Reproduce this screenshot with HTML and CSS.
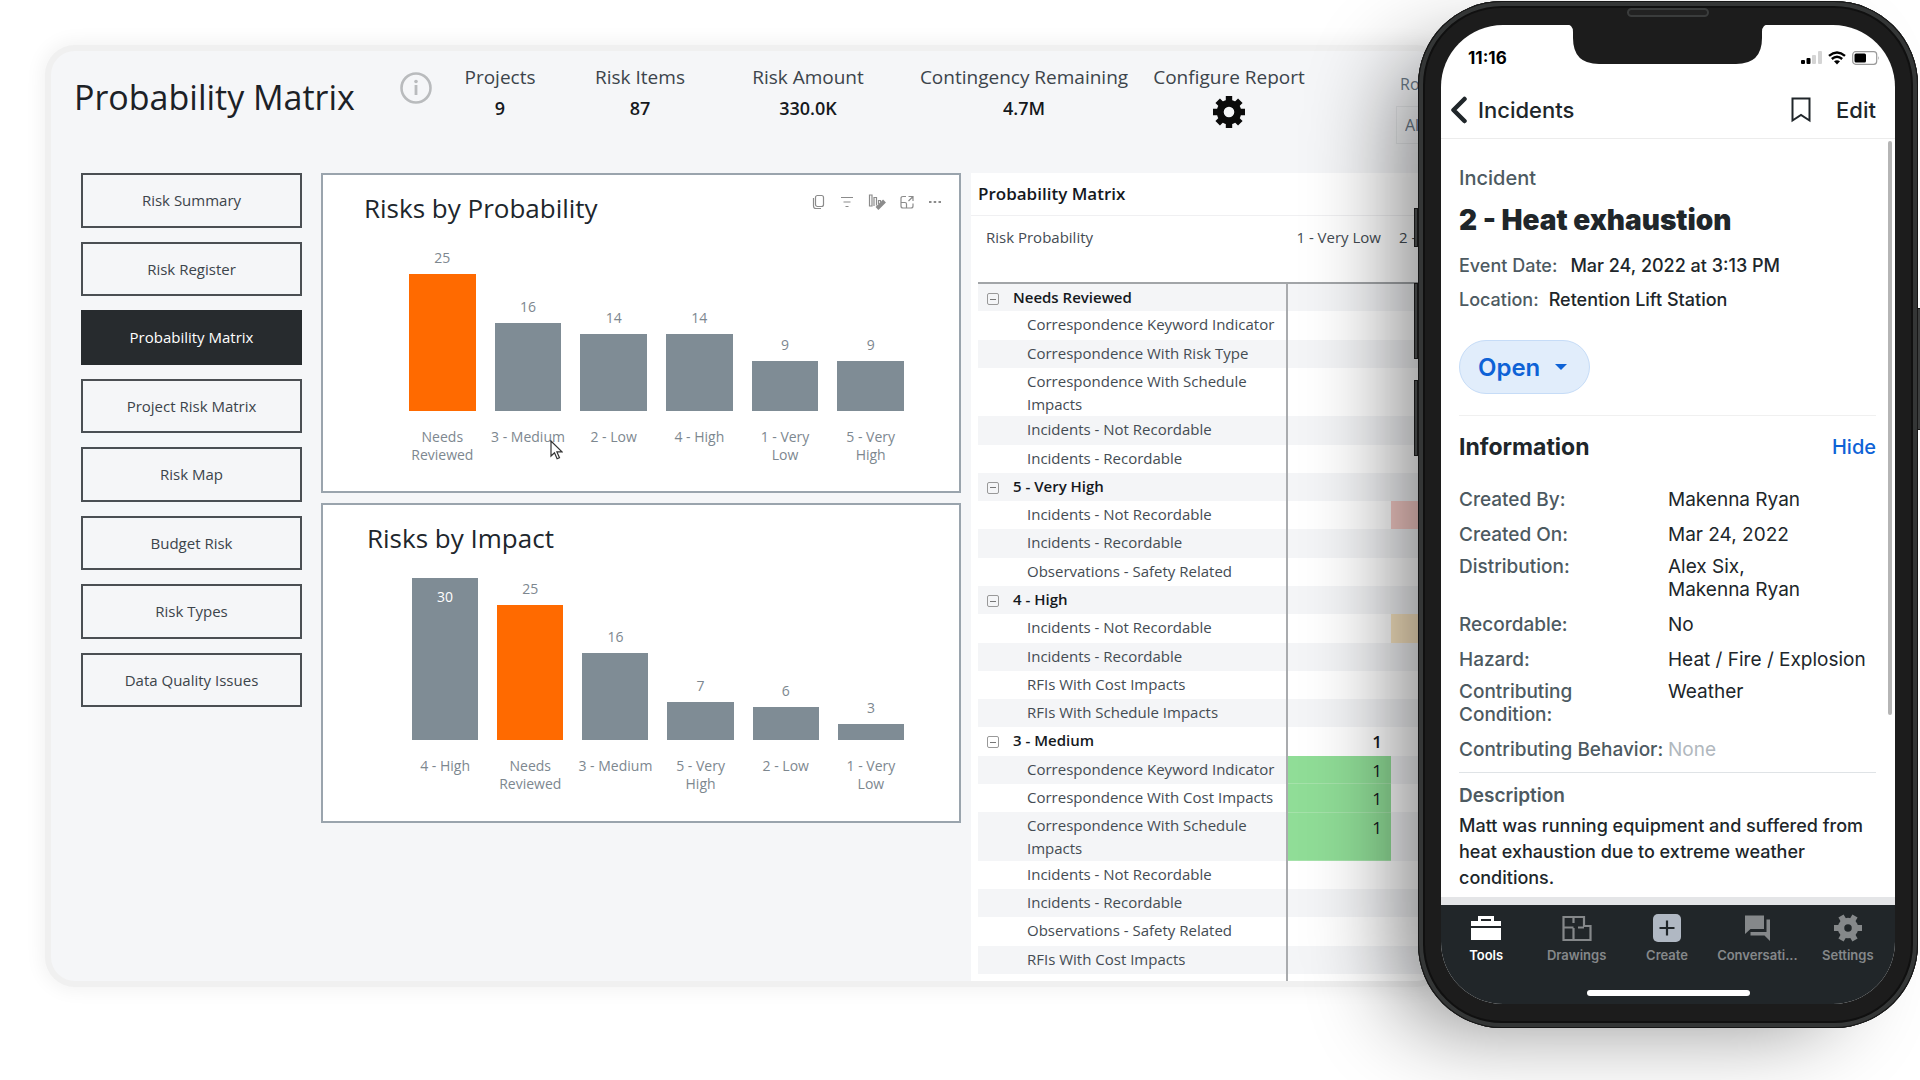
FILE: index.html
```html
<!DOCTYPE html>
<html lang="en">
<head>
<meta charset="utf-8">
<title>Probability Matrix</title>
<link rel="stylesheet" href="styles.css">
</head>
<body>
<main class="hero">
  <section class="dashboard">
    <header class="top">
      <h1>Probability Matrix</h1>
      <button class="info" aria-label="Info"><svg viewBox="0 0 32 32" width="32" height="32"><circle cx="16" cy="16" r="14.5" fill="none" stroke="#b9bbbd" stroke-width="2.6"/><path d="M16 13v10" stroke="#b9bbbd" stroke-width="2.8"/><circle cx="16" cy="9.5" r="1.8" fill="#b9bbbd"/></svg></button>
      <dl class="stats">
        <div><dt>Projects</dt><dd>9</dd></div>
        <div><dt>Risk Items</dt><dd>87</dd></div>
        <div><dt>Risk Amount</dt><dd>330.0K</dd></div>
        <div><dt>Contingency Remaining</dt><dd>4.7M</dd></div>
        <div><dt>Configure Report</dt><dd><button class="gear" aria-label="Configure Report"><svg viewBox="-16 -16 32 32" width="32" height="32"><circle r="8.8" fill="none" stroke="#0b0b0b" stroke-width="7"/><g stroke="#0b0b0b" stroke-width="6.4"><path d="M0-11V-16M0 11V16M-11 0H-16M11 0H16"/><path transform="rotate(45)" d="M0-11V-16M0 11V16M-11 0H-16M11 0H16"/></g></svg></button></dd></div>
      </dl>
      <div class="slicer">
        <label for="role">Role</label>
        <select id="role"><option>All</option></select>
      </div>
    </header>
    <div class="body">
      <nav class="menu">
        <button>Risk Summary</button>
        <button>Risk Register</button>
        <button class="active">Probability Matrix</button>
        <button>Project Risk Matrix</button>
        <button>Risk Map</button>
        <button>Budget Risk</button>
        <button>Risk Types</button>
        <button>Data Quality Issues</button>
      </nav>
      <div class="charts">
        <article class="card">
          <div class="card-head">
            <h2>Risks by Probability</h2>
            <div class="tools">
              <button aria-label="Copy"><svg viewBox="0 0 14 16" width="14" height="16"><rect x="3.5" y="1.5" width="8" height="11" rx="2"/><path d="M1.500 4v8q0 2.500 2.500 2.500h5"/></svg></button>
              <button aria-label="Filter"><svg viewBox="0 0 14 16" width="14" height="16"><path d="M1 3.500h12M3.500 8h7M5.500 12.500h3"/></svg></button>
              <button aria-label="Personalize"><svg viewBox="0 0 18 16" width="18" height="16"><path d="M1.500 1h2.500v11h-2.500zM6 12V3.500h2.500v8M10.500 10V6.500h2v2"/><path d="M9 14.500l7.500-7.500" stroke-width="4"/></svg></button>
              <button aria-label="Focus mode"><svg viewBox="0 0 14 16" width="14" height="16"><path d="M6 2.500H3q-2 0-2 2V12q0 2 2 2h8q2 0 2-2V9.500M8.500 2.500H13V7M13 2.500L8.500 7M1 8.500h4q1.500 0 1.500 1.500v4"/></svg></button>
              <button aria-label="More"><svg viewBox="0 0 14 16" width="14" height="16"><path d="M1 8h2.500M5.700 8h2.500M10.500 8h2.500" stroke-width="2.200"/></svg></button>
            </div>
          </div>
          <div class="chart">
            <div class="col"><span>25</span><i class="bar hot" style="height:137px"></i></div>
            <div class="col"><span>16</span><i class="bar" style="height:88px"></i></div>
            <div class="col"><span>14</span><i class="bar" style="height:77px"></i></div>
            <div class="col"><span>14</span><i class="bar" style="height:77px"></i></div>
            <div class="col"><span>9</span><i class="bar" style="height:50px"></i></div>
            <div class="col"><span>9</span><i class="bar" style="height:50px"></i></div>
          </div>
          <div class="axis"><span>Needs<br>Reviewed</span><span>3 - Medium</span><span>2 - Low</span><span>4 - High</span><span>1 - Very<br>Low</span><span>5 - Very<br>High</span></div>
          <svg class="cursor" viewBox="0 0 13 20" width="13" height="20"><path d="M1 1v15l3.500-3.300 2.600 6 2.400-1-2.600-5.800H12z" fill="#fff" stroke="#333" stroke-width="1.200"/></svg>
        </article>
        <article class="card impact">
          <div class="card-head"><h2>Risks by Impact</h2></div>
          <div class="chart">
            <div class="col"><i class="bar" style="height:162px"><span class="inside">30</span></i></div>
            <div class="col"><span>25</span><i class="bar hot" style="height:135px"></i></div>
            <div class="col"><span>16</span><i class="bar" style="height:87px"></i></div>
            <div class="col"><span>7</span><i class="bar" style="height:38px"></i></div>
            <div class="col"><span>6</span><i class="bar" style="height:33px"></i></div>
            <div class="col"><span>3</span><i class="bar" style="height:16px"></i></div>
          </div>
          <div class="axis"><span>4 - High</span><span>Needs<br>Reviewed</span><span>3 - Medium</span><span>5 - Very<br>High</span><span>2 - Low</span><span>1 - Very<br>Low</span></div>
        </article>
      </div>
      <article class="matrix">
        <h3>Probability Matrix</h3>
        <table>
          <colgroup><col class="c-name"><col class="c-val"><col></colgroup>
          <thead><tr><th>Risk Probability</th><th class="num">1 - Very Low</th><th>2 - Low</th></tr></thead>
          <tbody>
            <tr class="group"><th><button aria-label="Collapse"></button>Needs Reviewed</th><td></td><td></td></tr>
            <tr><th>Correspondence Keyword Indicator</th><td></td><td></td></tr>
            <tr><th>Correspondence With Risk Type</th><td></td><td></td></tr>
            <tr><th>Correspondence With Schedule Impacts</th><td></td><td></td></tr>
            <tr><th>Incidents - Not Recordable</th><td></td><td></td></tr>
            <tr><th>Incidents - Recordable</th><td></td><td></td></tr>
            <tr class="group"><th><button aria-label="Collapse"></button>5 - Very High</th><td></td><td></td></tr>
            <tr><th>Incidents - Not Recordable</th><td></td><td class="red"></td></tr>
            <tr><th>Incidents - Recordable</th><td></td><td></td></tr>
            <tr><th>Observations - Safety Related</th><td></td><td></td></tr>
            <tr class="group"><th><button aria-label="Collapse"></button>4 - High</th><td></td><td></td></tr>
            <tr><th>Incidents - Not Recordable</th><td></td><td class="amber"></td></tr>
            <tr><th>Incidents - Recordable</th><td></td><td></td></tr>
            <tr><th>RFIs With Cost Impacts</th><td></td><td></td></tr>
            <tr><th>RFIs With Schedule Impacts</th><td></td><td></td></tr>
            <tr class="group"><th><button aria-label="Collapse"></button>3 - Medium</th><td>1</td><td></td></tr>
            <tr><th>Correspondence Keyword Indicator</th><td class="green">1</td><td></td></tr>
            <tr><th>Correspondence With Cost Impacts</th><td class="green">1</td><td></td></tr>
            <tr><th>Correspondence With Schedule Impacts</th><td class="green">1</td><td></td></tr>
            <tr><th>Incidents - Not Recordable</th><td></td><td></td></tr>
            <tr><th>Incidents - Recordable</th><td></td><td></td></tr>
            <tr><th>Observations - Safety Related</th><td></td><td></td></tr>
            <tr><th>RFIs With Cost Impacts</th><td></td><td></td></tr>
          </tbody>
          <tfoot><tr><th></th><td></td><td></td></tr></tfoot>
        </table>
      </article>
    </div>
  </section>

  <section class="phone">
    <i class="key mute"></i><i class="key up"></i><i class="key down"></i><i class="key power"></i>
    <svg class="notch" viewBox="0 0 205 40" width="205" height="40"><path d="M0 0Q8 0 8 8V14Q8 40 34 40H171Q197 40 197 14V8Q197 0 205 0Z" fill="#1c1c1c"/></svg>
    <i class="speaker"></i>
    <div class="screen">
      <div class="status">
        <span>11:16</span>
        <div class="signals">
          <svg viewBox="0 0 21 14" width="21" height="14"><g fill="#000"><rect y="9" width="4" height="4" rx="1"/><rect x="5.500" y="7" width="4" height="6" rx="1"/></g><g fill="#d4d4d4"><rect x="11" y="4" width="4" height="9" rx="1"/><rect x="17" y="0" width="4" height="13" rx="1"/></g></svg>
          <svg viewBox="0 0 18 14" width="18" height="14" fill="none" stroke="#000" stroke-width="2.400"><path d="M1 4.800Q9-2 17 4.800M3.800 8Q9 3.500 14.200 8"/><path d="M9 13.500L6 10.300Q9 8 12 10.300Z" fill="#000" stroke="none"/></svg>
          <svg viewBox="0 0 28 14" width="28" height="14"><rect x=".7" y=".7" width="24" height="12.600" rx="3" fill="#fff" stroke="#9a9a9a" stroke-width="1.200"/><rect x="2.500" y="2.500" width="11.500" height="9" rx="1.500" fill="#000"/><path d="M26.300 5v4q1.500-2 0-4" fill="#9a9a9a"/></svg>
        </div>
      </div>
      <div class="navbar">
        <a class="back" href="#"><svg viewBox="0 0 17 28" width="17" height="28"><path d="M14.500 3L3.500 14l11 11" fill="none" stroke="#20262a" stroke-width="4.500" stroke-linecap="round" stroke-linejoin="round"/></svg>Incidents</a>
        <button class="mark" aria-label="Bookmark"><svg viewBox="0 0 20 26" width="20" height="26"><path d="M1.500 1.500h17v22l-8.500-5.500-8.500 5.500z" fill="none" stroke="#20262a" stroke-width="2"/></svg></button>
        <a class="edit" href="#">Edit</a>
      </div>
      <div class="content">
        <div class="summary">
          <p class="kind">Incident</p>
          <h2>2 - Heat exhaustion</h2>
          <p class="fact"><span>Event Date:</span> <b>Mar 24, 2022 at 3:13 PM</b></p>
          <p class="fact place"><span>Location:</span> <b>Retention Lift Station</b></p>
          <button class="pill">Open<svg viewBox="0 0 12 6" width="12" height="6"><path d="M0 0h12L6 6z" fill="#0e62d6"/></svg></button>
        </div>
        <div class="section-head"><h3>Information</h3><a href="#">Hide</a></div>
        <dl class="details">
          <dt>Created By:</dt><dd>Makenna Ryan</dd>
          <dt>Created On:</dt><dd>Mar 24, 2022</dd>
          <dt class="two">Distribution:</dt><dd class="two">Alex Six,<br>Makenna Ryan</dd>
          <dt>Recordable:</dt><dd>No</dd>
          <dt>Hazard:</dt><dd>Heat / Fire / Explosion</dd>
          <dt class="two">Contributing<br>Condition:</dt><dd class="two">Weather</dd>
          <dt>Contributing Behavior:</dt><dd class="none">None</dd>
        </dl>
        <div class="description">
          <h4>Description</h4>
          <p>Matt was running equipment and suffered from heat exhaustion due to extreme weather conditions.</p>
        </div>
        <i class="scroll"></i>
      </div>
      <nav class="tabs">
        <a class="on" href="#"><svg viewBox="0 0 30 28" width="30" height="28"><path d="M0 7h7V2h16v5h7v5H0zM10 5v2h10V5zM0 14h30v12H0z" fill="#fff" fill-rule="evenodd"/></svg>Tools</a>
        <a href="#"><svg viewBox="0 0 30 28" width="30" height="28"><path d="M1.500 3H22v9h6.500v14H1.500zM11.500 3v6M11.500 14v12M1.500 13.500h10M16 13.500h6" fill="none" stroke="#85888a" stroke-width="2.200"/></svg>Drawings</a>
        <a href="#"><svg viewBox="0 0 28 28" width="28" height="28"><rect width="28" height="28" rx="5" fill="#b0b8c3"/><path d="M14 6.500v15M6.500 14h15" stroke="#20262a" stroke-width="2.200"/></svg>Create</a>
        <a href="#"><svg viewBox="0 0 30 28" width="30" height="28"><path d="M3 1.500h19V15H8.500L3 20zM24.500 5.500H28V27l-5.500-5.500H8.500V18H24.500z" fill="#85888a"/></svg>Conversati...</a>
        <a href="#"><svg viewBox="-14 -14 28 28" width="28" height="28"><circle r="7" fill="none" stroke="#85888a" stroke-width="6.500"/><g stroke="#85888a" stroke-width="6"><path d="M-9 0h-5M9 0h5"/><path transform="rotate(60)" d="M-9 0h-5M9 0h5"/><path transform="rotate(120)" d="M-9 0h-5M9 0h5"/></g></svg>Settings</a>
      </nav>
      <div class="home"><i></i></div>
    </div>
  </section>
</main>
</body>
</html>
```
FILE: styles.css
```css
* { box-sizing: border-box; }
body { margin: 0; background: #fff; overflow: hidden; }
h1, h2, h3, h4, p, dl, dd { margin: 0; font-weight: 400; }
button { font: inherit; color: inherit; background: none; border: 0; padding: 0; }
a { color: inherit; text-decoration: none; }
svg { display: block; }
i { display: block; }

.hero { position: relative; min-height: 100vh; padding: 51px 480px 60px 51px; overflow: hidden; }

/* Dashboard */
.dashboard {
  min-height: 930px;
  padding: 0 0 0 30px;
  border-radius: 24px;
  background: #f5f6f8;
  box-shadow: 0 0 0 6px #f0f0f0, 0 0 18px 10px rgba(0, 0, 0, .05);
  font-family: "Open Sans", "Noto Sans", sans-serif;
  color: #3c444b;
  overflow: hidden;
}
.top { display: flex; height: 122px; }
.top > * { flex: none; }
.top h1 { width: 326px; padding-top: 18px; margin-left: -7px; font-size: 34px; line-height: 56px; color: #1c2126; white-space: nowrap; }
.info { align-self: flex-start; margin-top: 21px; }
.stats { display: grid; grid-template-columns: 140px 140px 196px 236px 174px; margin-left: -2px; padding-top: 14px; text-align: center; white-space: nowrap; }
.stats dt { font-size: 19px; line-height: 24px; }
.stats dd { padding-top: 7px; font-size: 18px; line-height: 24px; font-weight: 600; color: #15191d; }
.slicer { margin-left: 80px; padding-top: 21px; font-size: 16px; }
.slicer label { display: block; padding-left: 4px; line-height: 24px; color: #6c7a88; }
.slicer select { display: block; width: 90px; height: 38px; margin-top: 10px; padding-left: 8px; appearance: none; border: 1px solid #e6e8ea; background: #f5f6f8; color: #6c7a88; font: 16px "Open Sans", sans-serif; }

.body { display: flex; align-items: flex-start; }
.menu { display: grid; grid-auto-rows: 1fr; gap: 14px; width: 221px; height: 534px; }
.menu button { border: 2px solid #4b4f53; font-size: 15px; }
.menu .active { background: #272b2e; border-color: #272b2e; color: #fff; }

.charts { display: grid; gap: 10px; width: 640px; margin-left: 19px; }
.card { position: relative; height: 320px; padding: 15px 55px 0 86px; border: 2px solid #9aa4ad; background: #fff; }
.card-head { display: flex; justify-content: space-between; align-items: flex-start; margin: 0 -38px 0 -45px; height: 40px; }
.card h2 { font-size: 26px; line-height: 36px; color: #20262c; white-space: nowrap; }
.tools { display: flex; gap: 14px; align-items: center; height: 24px; }
.tools svg { fill: none; stroke: #8b8b8b; stroke-width: 1.2; }
.chart, .axis { display: grid; grid-template-columns: repeat(6, minmax(0, 1fr)); gap: 19px; font-size: 14px; color: #7d878f; }
.chart { height: 181px; align-items: end; }
.col { text-align: center; }
.col span { display: block; line-height: 18px; padding-bottom: 7px; }
.bar { background: #7f8c95; }
.hot { background: #ff6a00; }
.col .inside { padding-top: 10px; color: #fff; font-style: normal; }
.axis { padding-top: 17px; text-align: center; line-height: 18px; white-space: nowrap; }
.axis span { justify-self: center; }
.impact { padding-left: 89px; }
.impact .chart { height: 180px; }
.cursor { position: absolute; left: 227px; top: 265px; }

.matrix { flex: 1; min-width: 0; margin-left: 10px; padding: 0 0 0 7px; background: #fff; }
.matrix h3 { margin-left: -7px; padding-left: 7px; font-size: 17px; line-height: 42px; font-weight: 600; color: #15191d; border-bottom: 1px solid #f0f0f2; }
table { width: 100%; height: 765px; table-layout: fixed; border-collapse: collapse; font-size: 15px; line-height: 23px; color: #444c53; }
.c-name { width: 309px; }
.c-val { width: 104px; }
th { font-weight: 400; text-align: left; vertical-align: top; }
thead th { height: 67px; padding: 10px 0 0 8px; white-space: nowrap; border-bottom: 2px solid #a2a5a8; }
thead .num { padding-right: 10px; text-align: right; }
tbody th, tfoot th { border-right: 2px solid #a9abae; }
tbody th { height: 28px; padding: 2px 4px 0 49px; }
tbody td { padding: 3px 9px 0 0; text-align: right; vertical-align: top; font-size: 17px; color: #15191d; }
tbody tr:nth-child(odd) { background: #f4f5f7; }
tfoot th, tfoot td { height: 7px; padding: 0; }
.group th, .group td { font-weight: 600; color: #15191d; }
.group th { padding-left: 9px; }
.group button { width: 12px; height: 12px; margin-right: 14px; border: 1px solid #999; border-radius: 2px; vertical-align: -1px; }
.group button::after { content: ""; display: block; height: 1px; margin: 0 2px; background: #777; }
.green { background: #90dd97; border-bottom: 1px solid #a5e2aa; }
.red { background: #f8cdc8; }
.amber { background: #fce8c4; }

/* Phone */
.phone {
  position: absolute; top: 1px; right: 2px;
  width: 500px;
  padding: 24px 23px 24px;
  border-radius: 84px;
  background: #1c1c1c;
  box-shadow: inset 0 0 0 1px #161616, inset 0 0 0 5px #343636, inset 0 0 0 7px #101010, -50px 25px 90px -30px rgba(0, 0, 0, .48);
  font-family: Inter, "Liberation Sans", sans-serif;
  color: #20262a;
}
.key { position: absolute; left: -4px; width: 4px; background: #3c3e3e; border: 1px solid #161616; }
.mute { top: 207px; height: 39px; }
.up { top: 282px; height: 76px; }
.down { top: 379px; height: 76px; }
.power { left: auto; right: -3px; top: 307px; height: 122px; }
.notch { position: absolute; left: 147px; top: 23px; z-index: 1; }
.speaker { position: absolute; left: 209px; top: 7px; width: 82px; height: 9px; border: 2px solid #3a3c3c; border-radius: 5px; background: #222; }
.screen { position: relative; height: 979px; display: flex; flex-direction: column; border-radius: 62px; background: #fff; overflow: hidden; }
.status { display: flex; justify-content: space-between; align-items: center; height: 64px; padding: 1px 15px 0 27px; font-size: 17px; font-weight: 700; color: #000; }
.signals { display: flex; gap: 6px; }
.navbar { display: flex; align-items: center; height: 50px; padding: 0 19px 8px 9px; font-size: 22px; font-weight: 500; border-bottom: 1px solid #ececec; }
.back { flex: 1; display: flex; align-items: center; gap: 11px; }
.mark { margin-right: 25px; }
.content { position: relative; flex: 1; padding: 0 19px 0 18px; border-bottom: 8px solid #e4e5e7; }
.summary { height: 277px; padding-top: 24px; border-bottom: 1px solid #f0f0f0; }
.kind { font-size: 20px; line-height: 30px; font-weight: 500; color: #4d5a61; }
.summary h2 { margin-top: 7px; font-size: 28px; line-height: 40px; font-weight: 900; white-space: nowrap; }
.fact { display: flex; gap: 13px; margin-top: 9px; font-size: 18px; line-height: 34px; font-weight: 500; white-space: nowrap; color: #4d5a61; }
.fact b { font-weight: 500; color: #20262a; }
.place { margin-top: 0; gap: 10px; }
.pill { display: flex; align-items: center; gap: 15px; height: 54px; margin-top: 23px; padding: 0 22px 0 18px; border: 1px solid #c6dcf7; border-radius: 27px; background: #e1edfb; color: #0e62d6; font-size: 24px; font-weight: 600; }
.section-head { display: flex; justify-content: space-between; align-items: center; padding-top: 16px; line-height: 30px; }
.section-head h3 { font-size: 23px; font-weight: 700; }
.section-head a { font-size: 20px; font-weight: 500; color: #0e62d6; }
.details { display: grid; grid-template-columns: 209px 1fr; margin-top: 20px; font-size: 19px; line-height: 23px; font-weight: 500; white-space: nowrap; }
.details dt { padding: 6px 0; color: #4d5a61; }
.details dd { padding: 6px 0; }
.details .two { padding-top: 3px; }
.details .none { color: #b1b8be; }
.description { margin-top: 5px; padding-top: 9px; border-top: 1px solid #dfe3e6; }
.description h4 { font-size: 19px; line-height: 28px; font-weight: 600; color: #4d5a61; }
.description p { margin-top: 3px; font-size: 18px; line-height: 26px; font-weight: 500; }
.scroll { position: absolute; right: 3px; top: 2px; width: 4px; height: 574px; border-radius: 2px; background: #b5b5b5; }
.tabs { display: grid; grid-template-columns: repeat(5, minmax(0, 1fr)); height: 80px; padding: 9px 2px 0 0; background: #212629; color: #85888a; font-size: 13px; line-height: 15px; font-weight: 600; }
.tabs a { display: flex; flex-direction: column; align-items: center; gap: 6px; white-space: nowrap; }
.tabs .on { color: #fff; }
.home { height: 19px; background: #212629; padding-top: 5px; }
.home i { width: 163px; height: 6px; margin: 0 auto; border-radius: 3px; background: #fff; }
```
